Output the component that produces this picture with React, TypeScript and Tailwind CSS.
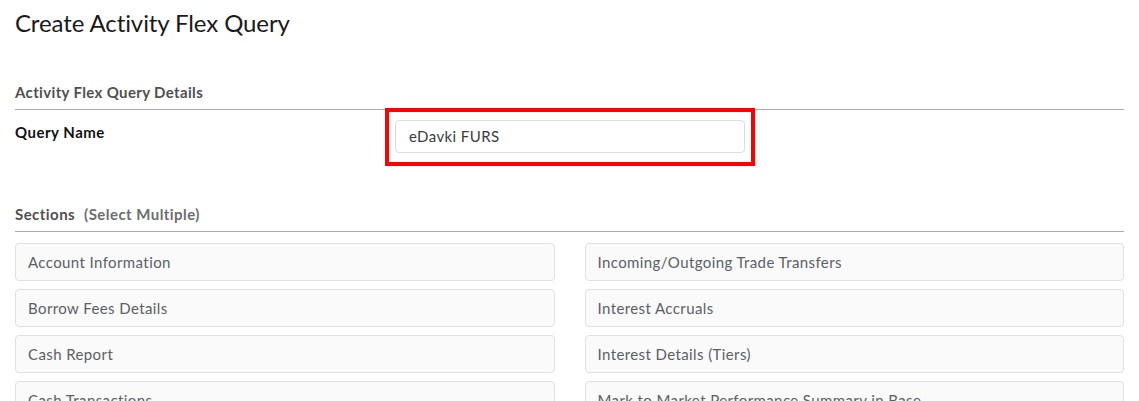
const leftSections = [
  "Account Information",
  "Borrow Fees Details",
  "Cash Report",
  "Cash Transactions",
];

const rightSections = [
  "Incoming/Outgoing Trade Transfers",
  "Interest Accruals",
  "Interest Details (Tiers)",
  "Mark to Market Performance Summary in Base",
];

const SectionCard = ({ label }: { label: string }) => (
  <div className="h-[38px] rounded-[4px] border border-[#e1e1e1] bg-[#fafafa] px-[12px] text-[15px] leading-[36px] tracking-[0.4px] text-[#5b6066] whitespace-nowrap overflow-hidden">
    {label}
  </div>
);

const App = () => {
  return (
    <div
      className="min-h-screen bg-white text-[#222] overflow-hidden"
      style={{ fontFamily: "Lato, 'Liberation Sans', sans-serif" }}
    >
      <div className="px-[15px]">
        {/* Page title */}
        <h1 className="pt-[7px] text-[24px] leading-[32px] font-normal tracking-[-0.1px] text-[#1a1a1a]">
          Create Activity Flex Query
        </h1>

        {/* Details header */}
        <div className="mt-[43px] border-b border-[#ababab] pb-[7px] text-[15px] leading-[20px] font-bold tracking-[0.35px] text-[#505050]">
          Activity Flex Query Details
        </div>

        {/* Query name row */}
        <div className="mt-[10px] flex items-start">
          <div className="w-[380px] pt-[2px] text-[15px] leading-[20px] font-bold tracking-[0.5px] text-[#111]">
            Query Name
          </div>
          <div className="relative w-[350px]">
            <div className="h-[33px] rounded-[4px] border border-[#dcdcdc] bg-white px-[13px] text-[15px] leading-[31px] tracking-[0.4px] text-[#3c3c3c]">
              eDavki FURS
            </div>
            {/* highlight annotation */}
            <div className="pointer-events-none absolute -left-[10px] -top-[12px] h-[58px] w-[370px] border-[4px] border-[#ff0000]" />
          </div>
        </div>

        {/* Sections header */}
        <div className="mt-[51px] border-b border-[#ababab] pb-[7px] text-[15px] leading-[20px] font-bold tracking-[0.45px]">
          <span className="text-[#505050]">Sections</span>
          <span className="ml-[9px] text-[#6d6d6d]">(Select Multiple)</span>
        </div>

        {/* Sections grid */}
        <div className="mt-[11px] grid grid-cols-2 gap-x-[30px]">
          <div className="flex flex-col gap-[8px]">
            {leftSections.map((s) => (
              <SectionCard key={s} label={s} />
            ))}
          </div>
          <div className="flex flex-col gap-[8px]">
            {rightSections.map((s) => (
              <SectionCard key={s} label={s} />
            ))}
          </div>
        </div>
      </div>
    </div>
  );
};

export default App;
